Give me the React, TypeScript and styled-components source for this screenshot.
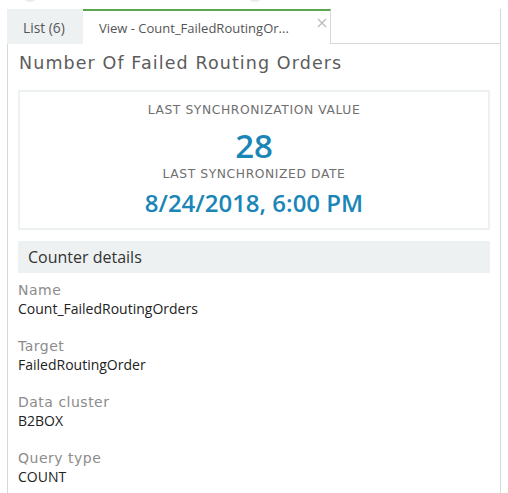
import React from "react";
import styled, { createGlobalStyle } from "styled-components";

const Global = createGlobalStyle`
  html, body { margin: 0; padding: 0; background: #fff; }
  body { font-family: "Open Sans", "Liberation Sans", sans-serif; }
`;

const Page = styled.div`
  width: 508px;
  height: 493px;
  overflow: hidden;
  position: relative;
  background: #fff;
`;

const TopStrip = styled.div`
  height: 9px;
  position: relative;
  overflow: hidden;
`;

const Peek = styled.div<{ $left: number }>`
  position: absolute;
  left: ${(p) => p.$left}px;
  top: -14px;
  width: 16px;
  height: 16px;
  border-radius: 50%;
  background: #e9ecec;
`;

const TabBar = styled.div`
  display: flex;
  align-items: stretch;
  padding-left: 7px;
  height: 35px;
`;

const Tab = styled.div<{ $active?: boolean }>`
  display: flex;
  align-items: center;
  box-sizing: border-box;
  font-size: ${(p) => (p.$active ? 13 : 13.8)}px;
  color: #555;
  background: ${(p) => (p.$active ? "#fff" : "#eef1f2")};
  border-top: 2px solid ${(p) => (p.$active ? "#5aa64f" : "#eef1f2")};
  border-right: ${(p) => (p.$active ? "1px solid #d6d9da" : "none")};
  padding-left: 16px;
  width: ${(p) => (p.$active ? 248 : 76)}px;
  position: relative;
`;

const TabFill = styled.div`
  flex: 1;
  border-bottom: 1px solid #d6d9da;
  margin-right: 7px;
  border-right: 1px solid #d6d9da;
`;

const Close = styled.svg`
  position: absolute;
  right: 3px;
  top: 7px;
`;

const Panel = styled.div`
  margin: 0 7px;
  border-left: 1px solid #d6d9da;
  border-right: 1px solid #d6d9da;
  padding: 0 10px 20px;
`;

const Title = styled.h1`
  margin: 0;
  padding: 6px 0 0 1px;
  font-family: "DejaVu Sans", sans-serif;
  font-weight: 400;
  font-size: 17.5px;
  letter-spacing: 1.1px;
  color: #5c5c5c;
  line-height: 26px;
`;

const SyncBox = styled.div`
  margin-top: 14px;
  border: 2px solid #edf1f1;
  height: 140px;
  box-sizing: border-box;
  display: flex;
  flex-direction: column;
  align-items: center;
  padding-top: 8.5px;
`;

const Caption = styled.div<{ $lh: number }>`
  font-family: "DejaVu Sans", sans-serif;
  font-weight: 400;
  font-size: 12.3px;
  letter-spacing: 0.6px;
  color: #707070;
  line-height: ${(p) => p.$lh}px;
`;

const Big = styled.div<{ $size: number; $lh: number; $mt?: number }>`
  font-family: "Open Sans", sans-serif;
  font-weight: 600;
  font-size: ${(p) => p.$size}px;
  color: #1a86b7;
  line-height: ${(p) => p.$lh}px;
  margin-top: ${(p) => p.$mt ?? 0}px;
`;

const SectionHeader = styled.div`
  margin-top: 11px;
  background: #eef1f2;
  height: 32px;
  display: flex;
  align-items: center;
  padding-left: 10px;
  font-size: 16px;
  color: #333;
`;

const Fields = styled.div`
  display: flex;
  flex-direction: column;
  gap: 18px;
  padding-top: 8px;
`;

const Field = styled.div`
  display: flex;
  flex-direction: column;
`;

const Label = styled.div`
  font-family: "DejaVu Sans", sans-serif;
  font-weight: 400;
  font-size: 14px;
  letter-spacing: 0.5px;
  color: #8c8c8c;
  line-height: 18px;
`;

const Value = styled.div`
  font-size: 14px;
  color: #222;
  line-height: 20px;
`;

const fields = [
  ["Name", "Count_FailedRoutingOrders"],
  ["Target", "FailedRoutingOrder"],
  ["Data cluster", "B2BOX"],
  ["Query type", "COUNT"],
];

export default function App() {
  return (
    <Page>
      <Global />
      <TopStrip>
        <Peek $left={22} />
        <Peek $left={247} />
      </TopStrip>
      <TabBar>
        <Tab>List (6)</Tab>
        <Tab $active>
          View - Count_FailedRoutingOr...
          <Close width="10" height="10" viewBox="0 0 10 10">
            <path d="M1 1L9 9M9 1L1 9" stroke="#bbb" strokeWidth="1.3" />
          </Close>
        </Tab>
        <TabFill />
      </TabBar>
      <Panel>
        <Title>Number Of Failed Routing Orders</Title>
        <SyncBox>
          <Caption $lh={18}>LAST SYNCHRONIZATION VALUE</Caption>
          <Big $size={33} $lh={37} $mt={8}>28</Big>
          <Caption $lh={20}>LAST SYNCHRONIZED DATE</Caption>
          <Big $size={24} $lh={38}>8/24/2018, 6:00 PM</Big>
        </SyncBox>
        <SectionHeader>Counter details</SectionHeader>
        <Fields>
          {fields.map(([l, v]) => (
            <Field key={l}>
              <Label>{l}</Label>
              <Value>{v}</Value>
            </Field>
          ))}
        </Fields>
      </Panel>
    </Page>
  );
}
